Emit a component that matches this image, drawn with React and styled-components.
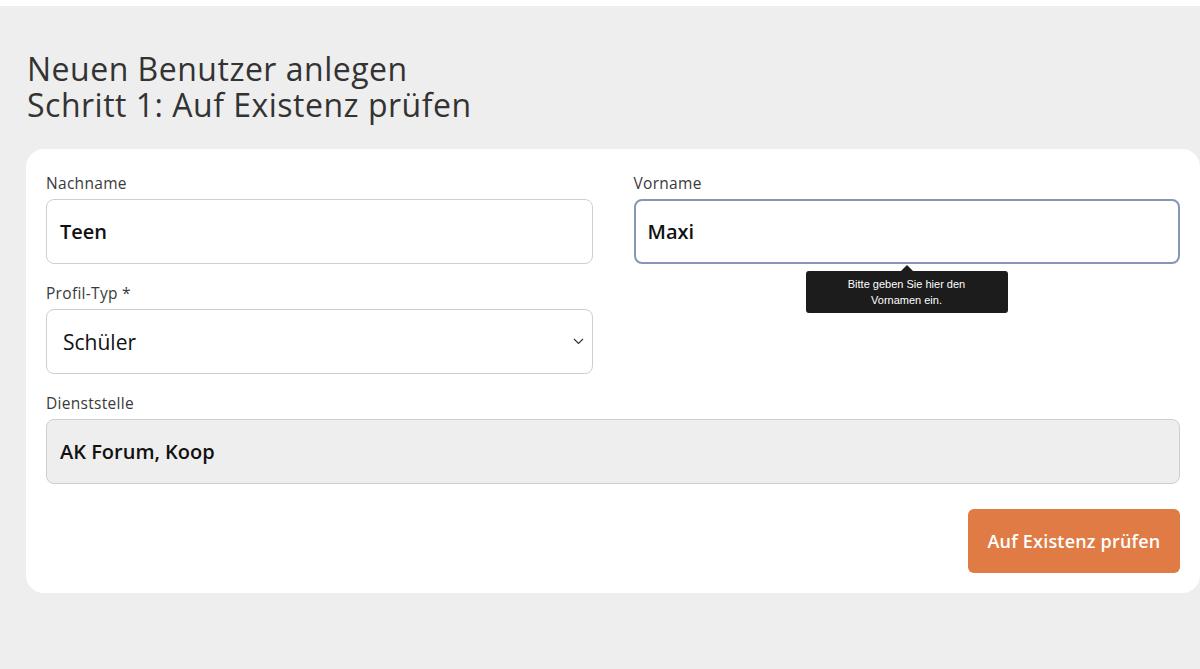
import React from 'react'
import styled, { createGlobalStyle } from 'styled-components'

const GlobalStyle = createGlobalStyle`
  html, body {
    margin: 0;
    padding: 0;
    background: #ffffff;
    font-family: "Open Sans", Lato, sans-serif;
  }
  * { box-sizing: border-box; }
`

const Page = styled.div`
  margin-top: 6px;
  min-height: 663px;
  background: #eeeeee;
  padding: 45px 0 0 26px;
  overflow: hidden;
`

const Heading = styled.h1`
  margin: 0 0 26px 1px;
  font-size: 32px;
  font-weight: 500;
  letter-spacing: 0.5px;
  color: #333333;
`

const HeadingLine = styled.span`
  display: block;
  line-height: 36px;
  height: 36px;
`

const Card = styled.div`
  background: #ffffff;
  border-radius: 18px;
  padding: 24px 20px 20px;
  display: flex;
  flex-direction: column;
  gap: 19px;
`

const Row = styled.div`
  display: grid;
  grid-template-columns: 1fr 1fr;
  column-gap: 41px;
`

const Field = styled.div`
  display: flex;
  flex-direction: column;
  gap: 6px;
  position: relative;
`

const Label = styled.label`
  font-size: 15.5px;
  line-height: 20px;
  color: #3a3a3a;
  font-weight: 500;
  letter-spacing: 0.3px;
`

const Input = styled.div`
  height: 65px;
  border-radius: 8px;
  border: ${p => (p.$focused ? '2px solid #8696b6' : '1px solid #cfcfcf')};
  background: ${p => (p.$disabled ? '#eeeeee' : '#ffffff')};
  padding: 0 ${p => (p.$focused ? '12px' : '13px')};
  display: flex;
  align-items: center;
  font-size: 20px;
  font-weight: 600;
  color: #111111;
`

const Select = styled(Input)`
  padding-left: 16px;
  padding-right: 8px;
  justify-content: space-between;
  font-weight: 500;
  font-size: 21px;
`

const Tooltip = styled.div`
  position: absolute;
  top: 98px;
  left: 172px;
  width: 202px;
  padding: 5px 34px;
  background: #1c1c1c;
  color: #ffffff;
  border-radius: 3px;
  font-family: "Liberation Sans", Arial, sans-serif;
  font-size: 11px;
  line-height: 16px;
  text-align: center;
  &::before {
    content: '';
    position: absolute;
    top: -6px;
    left: 95px;
    border-left: 6px solid transparent;
    border-right: 6px solid transparent;
    border-bottom: 6px solid #1c1c1c;
  }
`

const Actions = styled.div`
  display: flex;
  justify-content: flex-end;
  padding-top: 6px;
`

const Button = styled.button`
  height: 64px;
  width: 212px;
  border: none;
  border-radius: 6px;
  background: #e07b45;
  color: #ffffff;
  font-family: inherit;
  font-size: 18px;
  font-weight: 600;
  letter-spacing: 0.2px;
  cursor: pointer;
`

const Chevron = () => (
  <svg width="11" height="7" viewBox="0 0 11 7" fill="none">
    <path d="M1 1l4.5 4.5L10 1" stroke="#333" strokeWidth="1.2" />
  </svg>
)

export default function App() {
  return (
    <>
      <GlobalStyle />
      <Page>
        <Heading>
          <HeadingLine>Neuen Benutzer anlegen</HeadingLine>
          <HeadingLine>Schritt 1: Auf Existenz prüfen</HeadingLine>
        </Heading>
        <Card>
          <Row>
            <Field>
              <Label>Nachname</Label>
              <Input>Teen</Input>
            </Field>
            <Field>
              <Label>Vorname</Label>
              <Input $focused>Maxi</Input>
              <Tooltip>Bitte geben Sie hier den Vornamen ein.</Tooltip>
            </Field>
          </Row>
          <Row>
            <Field>
              <Label>Profil-Typ *</Label>
              <Select>
                Schüler
                <Chevron />
              </Select>
            </Field>
          </Row>
          <Field>
            <Label>Dienststelle</Label>
            <Input $disabled>AK Forum, Koop</Input>
          </Field>
          <Actions>
            <Button>Auf Existenz prüfen</Button>
          </Actions>
        </Card>
      </Page>
    </>
  )
}
